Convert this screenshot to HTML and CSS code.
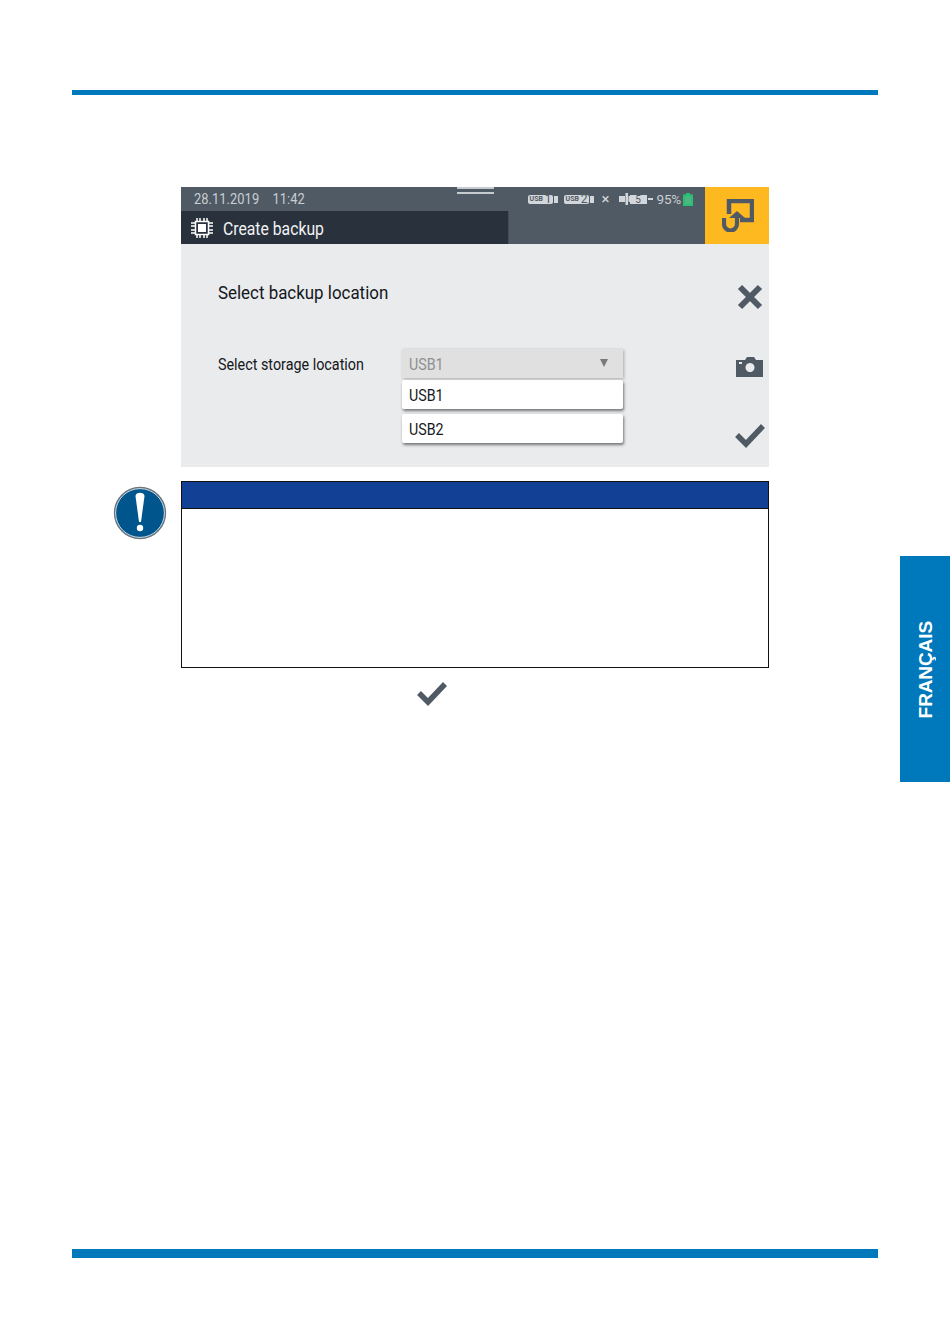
FILE: index.html
```html
<!DOCTYPE html>
<html lang="en">
<head>
<meta charset="utf-8">
<title>Create backup</title>
<link rel="stylesheet" href="styles.css">
</head>
<body>
<div class="page">
  <div class="rule rule-top"></div>
  <main class="content">
    <section class="screen">
      <header class="screen-head">
        <div class="head-main">
          <div class="status">
            <span class="datetime">28.11.2019&nbsp;&nbsp;&nbsp;11:42</span>
            <span class="handle"></span>
            <div class="status-icons">
              <span class="usb"><span class="usb-body"><span class="usb-tag">USB</span><span class="usb-num">1</span></span><span class="usb-plug"></span></span>
              <span class="usb"><span class="usb-body"><span class="usb-tag">USB</span><span class="usb-num">2</span></span><span class="usb-plug"></span></span>
              <span class="cross">×</span>
              <span class="probe"><svg class="probe-icon" width="11" height="12" viewBox="0 0 11 12"><path d="M0 3h6v6H0zM6.500 0h2.500v12H6.500zM9.500 3H11v6H9.500z" fill="#d3d6da"/></svg><span class="probe-num">5</span><span class="probe-dash"></span></span>
              <span class="percent">95%</span>
              <svg class="battery" width="10" height="13" viewBox="0 0 10 13"><path d="M3 0h4v1.500h3V13H0V1.500h3z" fill="#27c26f"/><rect x="2" y="3.500" width="6" height="7.500" fill="#4fb585"/></svg>
            </div>
          </div>
          <div class="title-row">
            <div class="title-bar">
              <svg class="chip" width="22" height="20" viewBox="0 0 22 20">
                <path d="M6 0v3M9 0v3M13 0v3M16 0v3M6 17v3M9 17v3M13 17v3M16 17v3M0 5h4M0 8h4M0 12h4M0 15h4M18 5h4M18 8h4M18 12h4M18 15h4" stroke="#fff" stroke-width="1.500" fill="none"/>
                <rect x="4.500" y="3.500" width="13" height="13" fill="none" stroke="#fff" stroke-width="1.500"/>
                <rect x="7" y="6" width="8" height="8" fill="#fff"/>
              </svg>
              <span class="title-text">Create backup</span>
            </div>
          </div>
        </div>
        <button class="back" aria-label="Back">
          <svg width="32" height="33" viewBox="0 0 32 33">
            <path d="M7 15V2h23v19H18" fill="none" stroke="#4f5a65" stroke-width="4.500"/>
            <path d="M2 19v6a6.500 6.500 0 0 0 13 0v-9" fill="none" stroke="#4f5a65" stroke-width="4.200"/>
            <path d="M7 19l8-7 8 7z" fill="#4f5a65"/>
          </svg>
        </button>
      </header>
      <div class="screen-body">
        <div class="form">
          <h1 class="form-title">Select backup location</h1>
          <div class="field">
            <label class="field-label">Select storage location</label>
            <div class="dropdown">
              <div class="select"><span class="item-text">USB1</span><span class="arrow"></span></div>
              <div class="option"><span class="item-text">USB1</span></div>
              <div class="option"><span class="item-text">USB2</span></div>
            </div>
          </div>
        </div>
        <div class="actions">
          <svg class="act-x" width="26" height="26" viewBox="0 0 26 26"><path d="M3 3l20 20M23 3L3 23" stroke="#4f5a65" stroke-width="6" fill="none"/></svg>
          <svg class="act-cam" width="28" height="21" viewBox="0 0 28 21"><path fill-rule="evenodd" d="M0 4h9l2-3h7l2 3h7v17H0zM14 7a4.500 4.500 0 1 0 .01 0zM3 6v2h3V6z" fill="#4f5a65"/></svg>
          <svg class="act-check" width="32" height="26" viewBox="0 0 32 26"><path d="M3 13l9 9L29 4" stroke="#4f5a65" stroke-width="5.500" fill="none"/></svg>
        </div>
      </div>
    </section>
    <section class="notice">
      <svg class="notice-icon" width="54" height="54" viewBox="0 0 54 54">
        <circle cx="27" cy="27" r="25.500" fill="#00568c" stroke="#6f7478" stroke-width="1.300"/>
        <circle cx="27" cy="27" r="24.400" fill="none" stroke="#fff" stroke-width=".8"/>
        <path d="M22.500 10c0-4.500 9-4.500 9 0l-3.500 26h-2z" fill="#fff"/>
        <circle cx="27" cy="42" r="3.200" fill="#fff"/>
      </svg>
      <div class="notice-box">
        <div class="notice-head"></div>
        <div class="notice-body"></div>
      </div>
    </section>
    <div class="confirm-line">
      <svg width="32" height="26" viewBox="0 0 32 26"><path d="M3 13l9 9L29 4" stroke="#4f5a65" stroke-width="5.500" fill="none"/></svg>
    </div>
  </main>
  <aside class="lang-tab"><span class="lang-text">FRANÇAIS</span></aside>
  <div class="rule rule-bottom"></div>
</div>
</body>
</html>
```
FILE: styles.css
```css
* { box-sizing: border-box; }
html, body { margin: 0; padding: 0; background: #fff; }
body { font-family: Roboto, "Liberation Sans", sans-serif; }
.page {
  position: relative;
  width: 950px;
  height: 1344px;
  padding: 90px 72px 86px;
  display: flex;
  flex-direction: column;
  overflow: hidden;
}
.rule { background: #0078bc; flex: none; }
.rule-top { height: 5px; }
.rule-bottom { height: 9px; margin-top: auto; }
.content { padding: 92px 109px 0; display: flex; flex-direction: column; }

/* device screen */
.screen { width: 588px; height: 280px; display: flex; flex-direction: column; background: #e9ebed; }
.screen-head { height: 57px; display: flex; background: #505a64; flex: none; }
.head-main { flex: 1; display: flex; flex-direction: column; min-width: 0; }
.status { height: 24px; display: flex; align-items: center; padding-left: 13px; position: relative; color: #c9ced3; }
.datetime { display: inline-block; font-size: 14px; word-spacing: 1.300px; letter-spacing: .05px; transform: scaleX(.92); transform-origin: left center; white-space: nowrap; }
.handle {
  position: absolute; left: 276px; top: 0; width: 37px; height: 7px;
  border-top: 2px solid #c6cbd0; border-bottom: 2px solid #c6cbd0;
}
.status-icons { margin-left: auto; margin-right: 12px; display: flex; align-items: center; height: 24px; }
.usb { display: flex; align-items: center; margin-right: 6px; }
.usb + .usb { margin-right: 5px; }
.usb-body {
  width: 25px; height: 9px; background: #d3d6da; color: #4f5a65; border-radius: 2px;
  display: flex; align-items: center; justify-content: space-between; padding: 0 1px 0 2px;
}
.usb-tag { font-size: 7px; font-weight: 700; line-height: 10px; }
.usb-num { font-size: 12px; line-height: 12px; font-weight: 400; }
.usb-plug { width: 4px; height: 7px; background: #d3d6da; margin-left: 1px; }
.cross { font-size: 15px; line-height: 12px; margin: 0 9px 0 3px; color: #d3d6da; }
.probe { display: flex; align-items: center; margin-right: 4px; }
.probe-icon { flex: none; }
.probe-num { width: 17px; height: 9px; background: #d3d6da; color: #4f5a65; font-size: 10px; line-height: 9px; text-align: center; }
.probe-dash { width: 5px; height: 2px; background: #d3d6da; margin-left: 1px; }
.percent { font-size: 13.500px; letter-spacing: -.2px; margin-right: 2px; color: #c9ced3; }
.battery { flex: none; }
.title-row { flex: 1; display: flex; }
.title-bar { width: 328px; background: #29313c; border-right: 1px solid #454e58; display: flex; align-items: center; padding-left: 10px; color: #f2f3f4; }
.chip { flex: none; margin-right: 10px; }
.title-text { display: inline-block; font-size: 18px; padding-top: 1px; transform: scaleX(.875); transform-origin: left center; white-space: nowrap; }
.back { width: 64px; flex: none; border: 0; padding: 0 0 0 1px; background: #ffb920; display: flex; align-items: center; justify-content: center; }

/* body of screen */
.screen-body { flex: 1; display: flex; }
.form { flex: 1; padding: 37px 0 0 37px; }
.form-title { margin: 0; font-size: 19px; line-height: 24px; font-weight: 400; color: #14171b; transform: scaleX(.89); transform-origin: left center; white-space: nowrap; }
.field { display: flex; align-items: flex-start; margin-top: 44px; }
.field-label { width: 184px; flex: none; font-size: 16px; line-height: 29px; padding-top: 1px; color: #14171b; transform: scaleX(.896); transform-origin: left center; white-space: nowrap; }
.dropdown { width: 221px; display: flex; flex-direction: column; }
.select, .option {
  height: 29px; padding: 0 7px; font-size: 16px; line-height: 31px;
  display: flex; justify-content: space-between;
}
.item-text { display: inline-block; transform: scaleX(.89); transform-origin: left center; }
.select { background: #e0e0e0; color: #8d8f91; box-shadow: 1px 1px 3px rgba(0,0,0,.28); padding-right: 15px; }
.arrow { width: 0; height: 0; margin-top: 10px; border-left: 4px solid transparent; border-right: 4px solid transparent; border-top: 8px solid #77797c; }
.option { background: #fff; color: #15181c; border-radius: 2px; box-shadow: 1px 2px 3px rgba(0,0,0,.5); margin-top: 2px; }
.option + .option { margin-top: 5px; }
.actions { width: 44px; flex: none; display: flex; flex-direction: column; align-items: center; padding: 40px 0 0 6px; }
.act-x { flex: none; }
.act-cam { flex: none; margin-top: 46px; margin-right: 1px; }
.act-check { flex: none; margin-top: 45px; }

/* notice */
.notice { position: relative; margin-top: 14px; }
.notice-icon { position: absolute; left: -68px; top: 5px; }
.notice-box { width: 588px; height: 187px; border: 1px solid #111; display: flex; flex-direction: column; }
.notice-head { height: 27px; background: #114094; border-bottom: 1px solid #111; }
.notice-body { flex: 1; }
.confirm-line { padding: 12px 0 0 235px; display: flex; line-height: 0; }

/* language tab */
.lang-tab {
  position: absolute; left: 900px; top: 556px; width: 50px; height: 226px; background: #0078bc;
  display: flex; align-items: center; justify-content: center;
}
.lang-text {
  writing-mode: vertical-rl; transform: rotate(180deg);
  font-family: "Liberation Sans", Arial, sans-serif; font-weight: 700; font-size: 19px; color: #fff;
  position: relative; left: 1px; top: 1px; letter-spacing: -.1px;
}
```
